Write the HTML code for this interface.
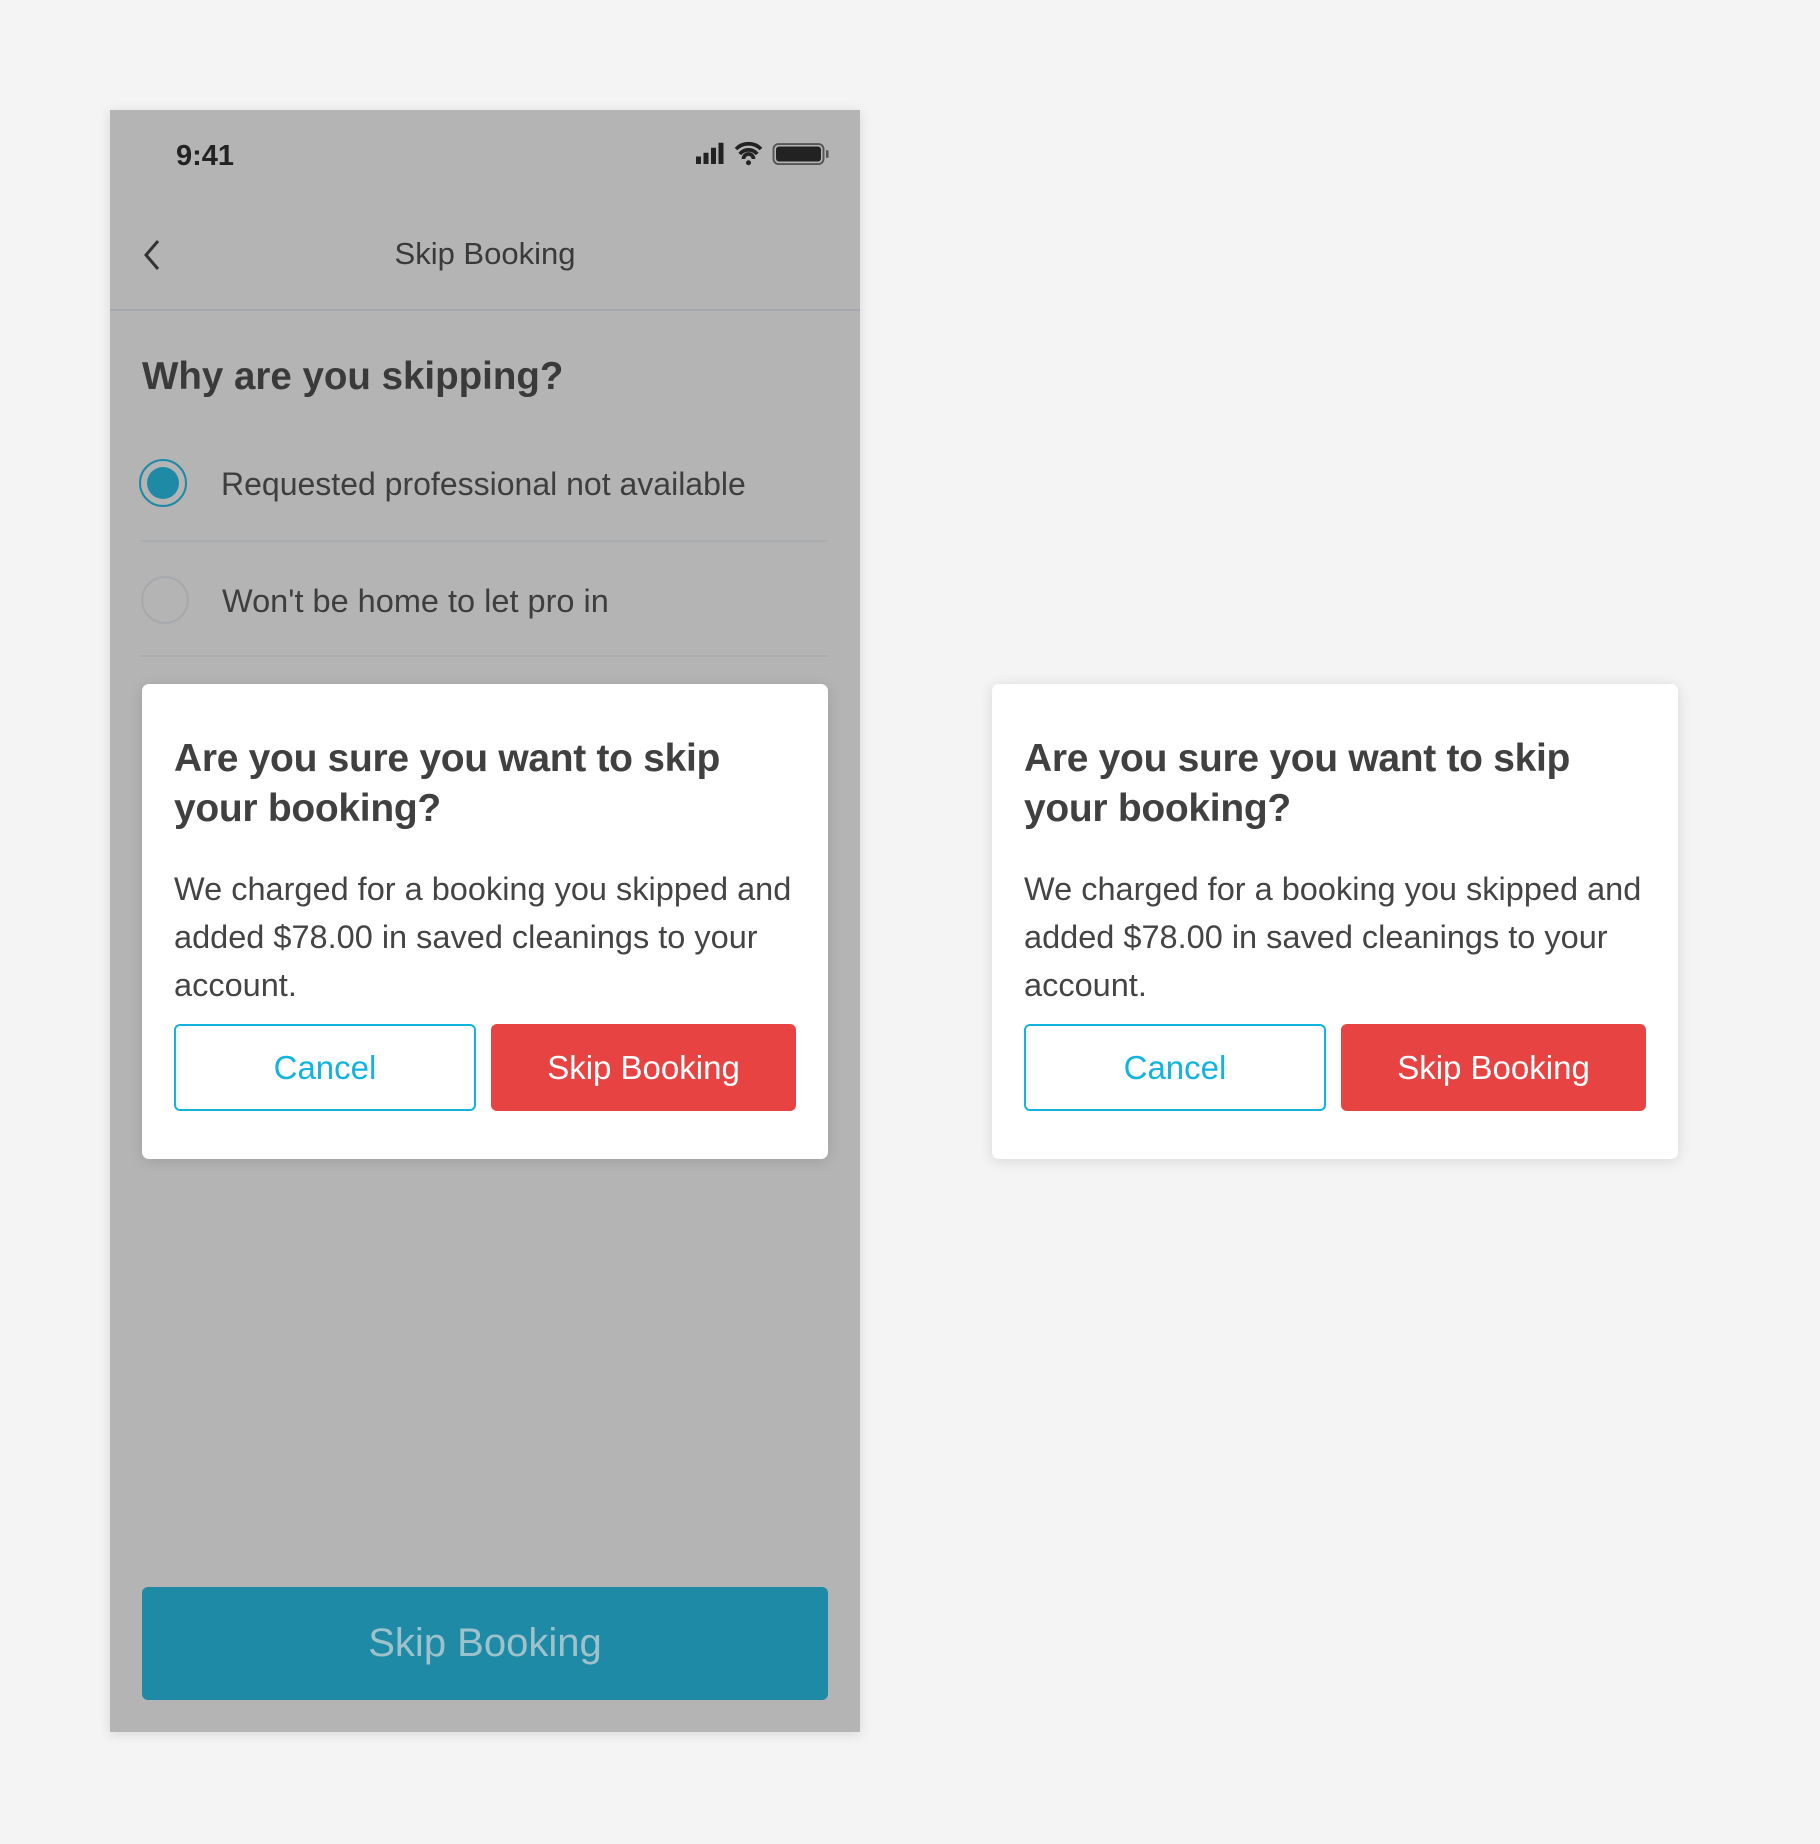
<!DOCTYPE html>
<html><head><meta charset="utf-8"><style>
*{margin:0;padding:0;box-sizing:border-box}
body{width:1820px;height:1844px;background:#f4f4f4;font-family:"Liberation Sans",sans-serif;position:relative;overflow:hidden}
.abs{position:absolute}
.phone{left:110px;top:110px;width:750px;height:1622px;background:#b4b4b4;box-shadow:0 2px 12px rgba(0,0,0,.12)}
.dlg{width:686px;height:475px;background:#fff;border-radius:7px;box-shadow:0 2px 14px rgba(0,0,0,.12)}
.dlg h2{position:absolute;left:32px;top:50px;width:580px;font-size:39px;line-height:50px;color:#404040;font-weight:bold;letter-spacing:-.3px}
.dlg p{position:absolute;left:32px;top:181px;width:640px;font-size:32.5px;line-height:48px;color:#444}
.btn{position:absolute;top:340px;height:87px;border-radius:6px;font-size:33px;display:flex;align-items:center;justify-content:center}
.c{left:32px;width:302px;border:2px solid #12b4df;color:#12b4df}
.s{left:349px;width:305px;background:#e84343;color:#fff}
</style></head><body>
<div class="abs phone">
 <div class="abs" style="left:66px;top:30px;font-size:29px;font-weight:bold;color:#222">9:41</div>
 <svg class="abs" style="left:586px;top:30px" width="150" height="28" viewBox="0 0 120 22">
  <rect x="0" y="13" width="4" height="6" fill="#222"/><rect x="6" y="10" width="4" height="9" fill="#222"/><rect x="12" y="6" width="4" height="13" fill="#222"/><rect x="18" y="2" width="4" height="17" fill="#222"/>
  <path d="M32 7a14 14 0 0 1 20 0M35 11a9 9 0 0 1 14 0M38 15a4 4 0 0 1 8 0" stroke="#222" stroke-width="3" fill="none"/><circle cx="42" cy="18" r="2" fill="#222"/>
  <rect x="62" y="3" width="40" height="16" rx="4" fill="none" stroke="#555" stroke-width="1.5"/><rect x="64" y="5" width="36" height="12" rx="2.5" fill="#222"/><rect x="104" y="8" width="2" height="6" fill="#555"/>
 </svg>
 <svg class="abs" style="left:30px;top:128px" width="24" height="34"><path d="M18 3L6 17l12 14" stroke="#333" stroke-width="3" fill="none"/></svg>
 <div class="abs" style="left:0;width:750px;top:126px;text-align:center;font-size:31px;color:#3a3a3a">Skip Booking</div>
 <div class="abs" style="left:0;top:199px;width:750px;height:2px;background:#a4a8ac"></div>
 <div class="abs" style="left:32px;top:245px;font-size:38.5px;font-weight:bold;color:#3a3a3a">Why are you skipping?</div>
 <div class="abs" style="left:29px;top:349px;width:48px;height:48px;border-radius:50%;border:2px solid #1e8aa6"></div>
 <div class="abs" style="left:37px;top:357px;width:32px;height:32px;border-radius:50%;background:#1e8aa6"></div>
 <div class="abs" style="left:111px;top:356px;font-size:32px;color:#3e3e3e">Requested professional not available</div>
 <div class="abs" style="left:30px;top:430px;width:688px;height:2px;background:#a9adb0"></div>
 <div class="abs" style="left:31px;top:466px;width:48px;height:48px;border-radius:50%;border:2px solid #a6a9ac"></div>
 <div class="abs" style="left:112px;top:473px;font-size:32.5px;color:#3e3e3e">Won't be home to let pro in</div>
 <div class="abs" style="left:30px;top:545px;width:688px;height:2px;background:#a9adb0"></div>
 <div class="abs" style="left:32px;top:1477px;width:686px;height:113px;background:#1e8aa6;border-radius:6px;display:flex;align-items:center;justify-content:center;font-size:40px;color:#9ec2cb">Skip Booking</div>
</div>
<div class="abs dlg" style="left:142px;top:684px">
 <h2>Are you sure you want to skip your booking?</h2>
 <p>We charged for a booking you skipped and added $78.00 in saved cleanings to your account.</p>
 <div class="btn c">Cancel</div><div class="btn s">Skip Booking</div>
</div>
<div class="abs dlg" style="left:992px;top:684px">
 <h2>Are you sure you want to skip your booking?</h2>
 <p>We charged for a booking you skipped and added $78.00 in saved cleanings to your account.</p>
 <div class="btn c">Cancel</div><div class="btn s">Skip Booking</div>
</div>
</body></html>
